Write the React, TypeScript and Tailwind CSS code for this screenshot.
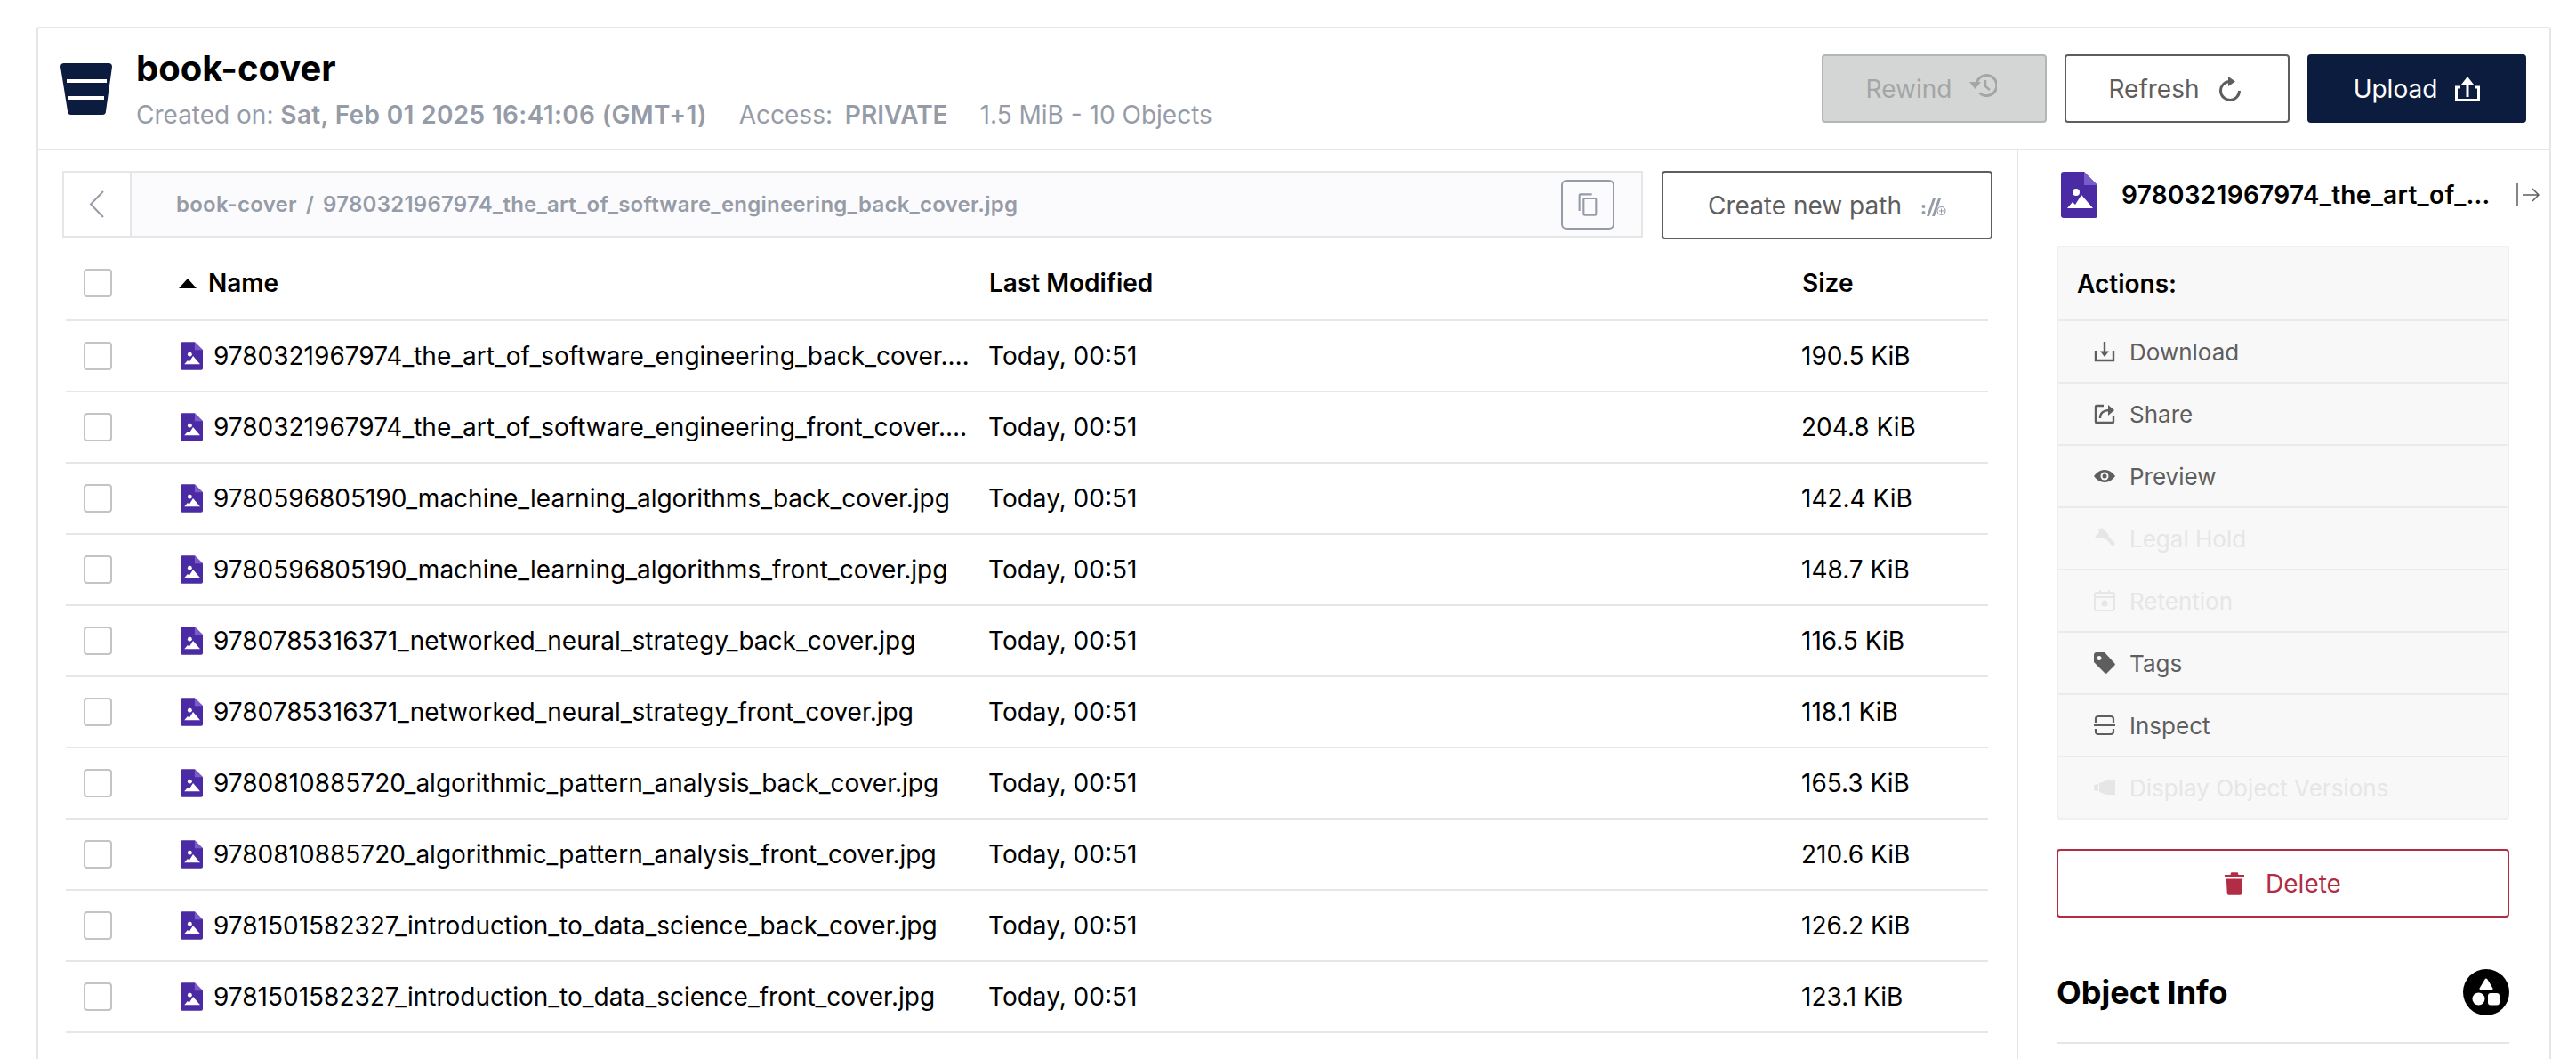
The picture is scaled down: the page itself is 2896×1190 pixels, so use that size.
import type { ReactNode } from "react";

const FILES = [
  { name: "9780321967974_the_art_of_software_engineering_back_cover.jpg", size: "190.5 KiB" },
  { name: "9780321967974_the_art_of_software_engineering_front_cover.jpg", size: "204.8 KiB" },
  { name: "9780596805190_machine_learning_algorithms_back_cover.jpg", size: "142.4 KiB" },
  { name: "9780596805190_machine_learning_algorithms_front_cover.jpg", size: "148.7 KiB" },
  { name: "9780785316371_networked_neural_strategy_back_cover.jpg", size: "116.5 KiB" },
  { name: "9780785316371_networked_neural_strategy_front_cover.jpg", size: "118.1 KiB" },
  { name: "9780810885720_algorithmic_pattern_analysis_back_cover.jpg", size: "165.3 KiB" },
  { name: "9780810885720_algorithmic_pattern_analysis_front_cover.jpg", size: "210.6 KiB" },
  { name: "9781501582327_introduction_to_data_science_back_cover.jpg", size: "126.2 KiB" },
  { name: "9781501582327_introduction_to_data_science_front_cover.jpg", size: "123.1 KiB" },
];

function ImageFileIcon({ className }: { className: string }) {
  return (
    <svg viewBox="0 0 41 52" className={className}>
      <path d="M3 0h23l15 15v34a3 3 0 0 1-3 3H3a3 3 0 0 1-3-3V3a3 3 0 0 1 3-3z" fill="#4b2ba3" />
      <path d="M26 0l15 15H26z" fill="#7a5bc9" />
      <circle cx="17" cy="23" r="4" fill="#fff" />
      <path d="M7 41l6-7 3 3 7-11 13 15z" fill="#fff" />
    </svg>
  );
}

function BucketIcon() {
  return (
    <svg viewBox="0 0 58 58" className="w-[58px] h-[58px]">
      <path d="M4 0h50a4 4 0 0 1 4 4l-7 50a4 4 0 0 1-4 4H12a4 4 0 0 1-4-4L0 4a4 4 0 0 1 4-4z" fill="#0c1c3e" />
      <rect x="7" y="18" width="45" height="4" fill="#fff" />
      <rect x="9" y="37" width="40" height="4" fill="#fff" />
    </svg>
  );
}

function Checkbox() {
  return <div className="w-8 h-8 rounded-[4px] border-2 border-[#c4c4c4] bg-white shrink-0" />;
}

function ActionRow({ label, icon, disabled }: { label: string; icon: ReactNode; disabled?: boolean }) {
  return (
    <div
      className={`h-[70px] flex items-center pl-[40px] border-t-2 border-[#ebebeb] text-[26px] ${
        disabled ? "text-[#e6e6e6]" : "text-[#5e5e5e]"
      }`}
    >
      <span className="w-[24px] h-[24px] mr-4 flex items-center justify-center">{icon}</span>
      {label}
    </div>
  );
}

export default function App() {
  return (
    <div className="w-[2896px] h-[1190px] overflow-hidden bg-white pt-[30px] pl-[41px] pr-[28px] font-['Inter',sans-serif] text-black">
      {/* Bucket header */}
      <div className="h-[139px] border-2 border-[#e6e6e6] rounded-[3px] flex items-center pl-[25px] pr-[26px]">
        <BucketIcon />
        <div className="ml-[27px]">
          <div className="text-[40px] leading-[48px] font-bold">book-cover</div>
          <div className="mt-[11px] text-[28px] leading-[34px] text-[#969ca7] flex">
            <span>
              Created on: <b className="font-semibold tracking-[0.35px]">Sat, Feb 01 2025 16:41:06 (GMT+1)</b>
            </span>
            <span className="ml-9">
              Access: <b className="font-semibold ml-[6px]">PRIVATE</b>
            </span>
            <span className="ml-9">1.5 MiB - 10 Objects</span>
          </div>
        </div>
        <div className="ml-auto flex gap-5 text-[28px]">
          <button className="w-[253px] h-[77px] pr-[6px] rounded-[4px] border-2 border-[#b4b6b6] bg-[#d4d5d5] text-[#a4a6a6] flex items-center justify-center gap-5">
            Rewind
            <svg viewBox="0 0 31 26" className="w-[31px] h-[26px] -translate-y-1" fill="none" stroke="#a4a6a6" strokeWidth="3">
              <path d="M8 11a11.500 11.500 0 1 1 3.500 10.500" />
              <path d="M0 9h13l-6.500 8z" fill="#a4a6a6" stroke="none" />
              <path d="M18 7v7l5 4" strokeWidth="2.500" />
            </svg>
          </button>
          <button className="w-[253px] h-[77px] pr-[6px] rounded-[4px] border-2 border-[#5e5e5e] bg-white text-[#5e5e5e] flex items-center justify-center gap-[22px]">
            Refresh
            <svg viewBox="0 0 24 28" className="w-[24px] h-[28px]" fill="none" stroke="#5e5e5e" strokeWidth="3">
              <path d="M11 5.500A10.500 10.500 0 1 0 22.500 16" />
              <path d="M10 0l8 5.500-8 5.500z" fill="#5e5e5e" stroke="none" />
            </svg>
          </button>
          <button className="w-[246px] h-[77px] rounded-[4px] bg-[#0c1c3e] text-white flex items-center justify-center gap-5">
            Upload
            <svg viewBox="0 0 28 28" className="w-[28px] h-[28px]" fill="none" stroke="#fff" strokeWidth="3">
              <path d="M14 6v17" />
              <path d="M7 9l7-9 7 9z" fill="#fff" stroke="none" />
              <path d="M6 12H1.500v14.500h25V12H22" />
            </svg>
          </button>
        </div>
      </div>

      <div className="h-[1021px] flex border-x-2 border-[#e6e6e6]">
        {/* Object list */}
        <div className="w-[2224px] shrink-0 pl-[27px] pt-[23px]">
          <div className="flex items-start">
            <div className="w-[1777px] h-[75px] flex border-2 border-[#e6e6e6]">
              <div className="w-[76px] flex items-center justify-center border-r-2 border-[#e6e6e6] bg-white">
                <svg viewBox="0 0 18 31" className="w-[18px] h-[31px]" fill="none" stroke="#969ca7" strokeWidth="2">
                  <path d="M16 1L2 15.500 16 30" />
                </svg>
              </div>
              <div className="flex-1 bg-[#fbfbfd] flex items-center pl-[50px] pr-[30px]">
                <span className="text-[24px] font-semibold text-[#969ca7] whitespace-nowrap tracking-[0.25px]">
                  book-cover
                  <span className="mx-[10px]">/</span>
                  9780321967974_the_art_of_software_engineering_back_cover.jpg
                </span>
                <div className="ml-auto w-[60px] h-[56px] rounded-[6px] border-2 border-[#969ca7] flex items-center justify-center">
                  <svg viewBox="0 0 24 24" className="w-7 h-7" fill="none" stroke="#969ca7" strokeWidth="1.8">
                    <rect x="8" y="6" width="12" height="16" rx="1" />
                    <path d="M4 18V3a1 1 0 0 1 1-1h11" />
                  </svg>
                </div>
              </div>
            </div>
            <div className="ml-[21px] w-[372px] h-[77px] rounded-[4px] border-2 border-[#5e5e5e] text-[#5e5e5e] text-[28px] flex items-center justify-center gap-[22px]">
              Create new path
              <svg viewBox="0 0 28 20" className="w-7 h-5 translate-y-[2px]" fill="#969ca7">
                <circle cx="2.500" cy="9" r="2" />
                <circle cx="2.500" cy="16" r="2" />
                <path d="M6 20L13 0h3L9 20zM12 20L19 0h3l-7 20z" />
                <circle cx="22.500" cy="14" r="4.500" fill="#fff" stroke="#969ca7" strokeWidth="1.200" />
                <path d="M22 11.500h1v2h2v1h-2v2h-1v-2h-2v-1h2z" />
              </svg>
            </div>
          </div>

          <div className="w-[2161px] ml-[4px]">
            <div className="h-[92px] pt-[8px] flex items-center border-b-2 border-[#e6e6e6] text-[28px] font-semibold">
              <div className="w-[126px] pl-5">
                <Checkbox />
              </div>
              <div className="w-[912px] flex items-center">
                <svg viewBox="0 0 22 14" className="w-[22px] h-[14px] mr-3">
                  <path d="M11 2l10 11H1z" fill="#000" />
                </svg>
                Name
              </div>
              <div className="w-[914px]">Last Modified</div>
              <div>Size</div>
            </div>
            {FILES.map((f) => (
              <div key={f.name} className="h-[80px] flex items-center border-b-2 border-[#e6e6e6] text-[28px]">
                <div className="w-[129px] pl-5">
                  <Checkbox />
                </div>
                <ImageFileIcon className="w-[25px] h-[32px] shrink-0" />
                <div className="w-[850px] ml-3 mr-[21px] truncate">{f.name}</div>
                <div className="w-[914px]">Today, 00:51</div>
                <div>{f.size}</div>
              </div>
            ))}
          </div>
        </div>

        {/* Object details */}
        <div className="flex-1 min-w-0 border-l-2 border-[#e6e6e6] pl-[43px] pr-[45px] pt-[24px]">
          <div className="flex items-center h-[52px] pl-[5px] -mr-[34px]">
            <ImageFileIcon className="w-[41px] h-[52px] shrink-0" />
            <div className="ml-[27px] w-[417px] shrink-0 text-[28px] font-semibold truncate tracking-[0.3px]">
              9780321967974_the_art_of_software_engineering_back_cover.jpg
            </div>
            <svg viewBox="0 0 28 28" className="ml-[26px] w-7 h-7 shrink-0" fill="none" stroke="#5e5e5e" strokeWidth="1.5">
              <path d="M2 1v26M8 14h18M19 7l7 7-7 7" />
            </svg>
          </div>

          <div className="mt-[31px] rounded-[4px] border-2 border-[#f0f0f0] bg-[#f8f8f8]">
            <div className="h-[81px] flex items-center pl-[21px] text-[28px] font-semibold">Actions:</div>
            <ActionRow
              label="Download"
              icon={
                <svg viewBox="0 0 24 24" className="w-6 h-6" fill="none" stroke="#5e5e5e" strokeWidth="2.400">
                  <path d="M2 11v11h20V11M12 1v15" />
                  <path d="M7 11.500h10l-5 6.500z" fill="#5e5e5e" stroke="none" />
                </svg>
              }
            />
            <ActionRow
              label="Share"
              icon={
                <svg viewBox="0 0 24 24" className="w-6 h-6" fill="none" stroke="#5e5e5e" strokeWidth="2.400">
                  <path d="M11 3H3a1 1 0 0 0-1 1v17a1 1 0 0 0 1 1h18a1 1 0 0 0 1-1v-7" />
                  <path d="M7 17c0-6 4-9 10-9" />
                  <path d="M16 2l7 6-7 6z" fill="#5e5e5e" stroke="none" />
                </svg>
              }
            />
            <ActionRow
              label="Preview"
              icon={
                <svg viewBox="0 0 24 24" className="w-6 h-6">
                  <path d="M12 5C6 5 2 9.500 0 12c2 2.500 6 7 12 7s10-4.500 12-7c-2-2.500-6-7-12-7z" fill="#5e5e5e" />
                  <circle cx="12" cy="12" r="4.500" fill="#f8f8f8" />
                  <circle cx="12" cy="12" r="2.500" fill="#5e5e5e" />
                </svg>
              }
            />
            <ActionRow
              disabled
              label="Legal Hold"
              icon={
                <svg viewBox="0 0 24 24" className="w-6 h-6" fill="#e6e6e6">
                  <path d="M9 0l8 8-5 5-2-2-4 1-5-2 5-5-1-2zM13 12l3-3 8 9-3 3z" />
                </svg>
              }
            />
            <ActionRow
              disabled
              label="Retention"
              icon={
                <svg viewBox="0 0 24 24" className="w-6 h-6" fill="none" stroke="#e6e6e6" strokeWidth="2">
                  <rect x="1" y="3" width="22" height="20" rx="2" />
                  <path d="M1 8h22M7 0v4M17 0v4" />
                  <circle cx="12" cy="15" r="3.500" fill="#e6e6e6" stroke="none" />
                </svg>
              }
            />
            <ActionRow
              label="Tags"
              icon={
                <svg viewBox="0 0 24 24" className="w-6 h-6" fill="#5e5e5e">
                  <path
                    d="M0 3a3 3 0 0 1 3-3h9l11 12a2 2 0 0 1 0 3l-8 8a2 2 0 0 1-3 0L0 11zM6 4a2.500 2.500 0 1 0 .01 0z"
                    fillRule="evenodd"
                  />
                </svg>
              }
            />
            <ActionRow
              label="Inspect"
              icon={
                <svg viewBox="0 0 24 24" className="w-6 h-6" fill="none" stroke="#5e5e5e" strokeWidth="2.200">
                  <path d="M2 9V5a3 3 0 0 1 3-3h14a3 3 0 0 1 3 3v4M0 12h24M2 16v3a3 3 0 0 0 3 3h14a3 3 0 0 0 3-3v-3" />
                </svg>
              }
            />
            <ActionRow
              disabled
              label="Display Object Versions"
              icon={
                <svg viewBox="0 0 24 24" className="w-6 h-6" fill="#e6e6e6">
                  <path d="M0 9l5-1v8l-5-1zM6 7l6-2v14l-6-2zM13 4h11v16H13z" />
                </svg>
              }
            />
          </div>

          <button className="mt-[33px] w-full h-[77px] rounded-[4px] border-2 border-[#b32c45] text-[#b32c45] text-[28px] flex items-center justify-center gap-6">
            <svg viewBox="0 0 24 28" className="w-[22px] h-[28px]" fill="#b32c45">
              <path d="M8 0h8l1 3h7v3H0V3h7zM2 8h20l-1 18a2 2 0 0 1-2 2H5a2 2 0 0 1-2-2z" />
            </svg>
            Delete
          </button>

          <div className="mt-[58px] flex items-center justify-between pb-[31px] border-b-2 border-[#e6e6e6] h-[84px]">
            <span className="text-[36px] font-bold leading-[52px]">Object Info</span>
            <svg viewBox="0 0 52 52" className="w-[52px] h-[52px]">
              <circle cx="26" cy="26" r="26" fill="#000" />
              <path d="M26 12l6 10H20z" fill="#fff" stroke="#fff" strokeWidth="3" strokeLinejoin="round" />
              <circle cx="17.500" cy="33.500" r="7" fill="#fff" />
              <rect x="28" y="27" width="13" height="13.500" rx="3" fill="#fff" />
            </svg>
          </div>
        </div>
      </div>
    </div>
  );
}
